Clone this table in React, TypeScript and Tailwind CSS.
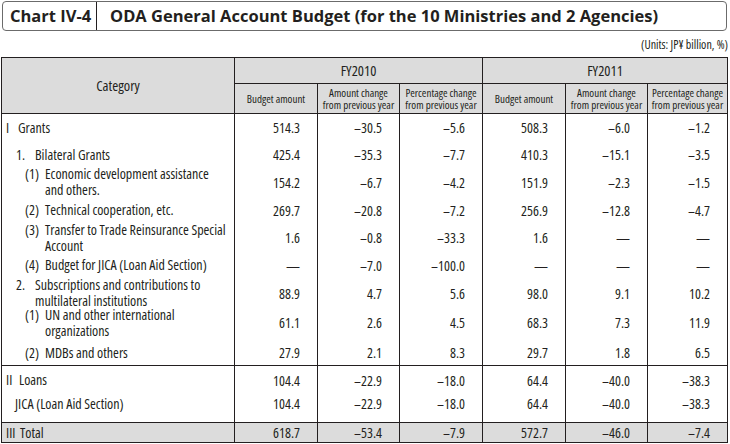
import React from "react";

type Row = {
  h: string;
  label: React.ReactNode;
  vals: string[];
  pad?: string;
};

function Label({ pl, mark, mw, children }: { pl: string; mark?: string; mw?: string; children: React.ReactNode }) {
  return (
    <div className={`flex ${pl}`}>
      {mark !== undefined && <span className={`shrink-0 ${mw}`}>{mark}</span>}
      <span>{children}</span>
    </div>
  );
}

const grants: Row[] = [
  { h: "h-[27px]", label: <Label pl="pl-[4px]" mark="I" mw="w-[12px]">Grants</Label>, vals: ["514.3", "–30.5", "–5.6", "508.3", "–6.0", "–1.2"] },
  { h: "h-[27px]", label: <Label pl="pl-[14px]" mark="1." mw="w-[19px]">Bilateral Grants</Label>, vals: ["425.4", "–35.3", "–7.7", "410.3", "–15.1", "–3.5"] },
  {
    h: "h-[28px]",
    label: <Label pl="pl-[23px]" mark="(1)" mw="w-[20px]">Economic development assistance<br />and others.</Label>,
    vals: ["154.2", "–6.7", "–4.2", "151.9", "–2.3", "–1.5"],
  },
  { h: "h-[28px]", label: <Label pl="pl-[23px]" mark="(2)" mw="w-[20px]">Technical cooperation, etc.</Label>, vals: ["269.7", "–20.8", "–7.2", "256.9", "–12.8", "–4.7"] },
  {
    h: "h-[27px]",
    label: <Label pl="pl-[23px]" mark="(3)" mw="w-[20px]">Transfer to Trade Reinsurance Special<br />Account</Label>,
    vals: ["1.6", "–0.8", "–33.3", "1.6", "—", "—"],
  },
  { h: "h-[28px]", label: <Label pl="pl-[23px]" mark="(4)" mw="w-[20px]">Budget for JICA (Loan Aid Section)</Label>, vals: ["—", "–7.0", "–100.0", "—", "—", "—"] },
  {
    h: "h-[28px]",
    label: <Label pl="pl-[14px]" mark="2." mw="w-[19px]">Subscriptions and contributions to<br />multilateral institutions</Label>,
    vals: ["88.9", "4.7", "5.6", "98.0", "9.1", "10.2"],
  },
  {
    h: "h-[31px]",
    label: <Label pl="pl-[23px]" mark="(1)" mw="w-[20px]">UN and other international<br />organizations</Label>,
    vals: ["61.1", "2.6", "4.5", "68.3", "7.3", "11.9"],
  },
  { h: "h-[27px]", label: <Label pl="pl-[23px]" mark="(2)" mw="w-[20px]">MDBs and others</Label>, vals: ["27.9", "2.1", "8.3", "29.7", "1.8", "6.5"], pad: "pt-[2px]" },
];

const loans: Row[] = [
  { h: "h-[28px]", label: <Label pl="pl-[4px]" mark="II" mw="w-[13px]">Loans</Label>, vals: ["104.4", "–22.9", "–18.0", "64.4", "–40.0", "–38.3"] },
  { h: "h-[28px]", label: <Label pl="pl-[13px]">JICA (Loan Aid Section)</Label>, vals: ["104.4", "–22.9", "–18.0", "64.4", "–40.0", "–38.3"], pad: "pb-[9px]" },
];

const widths = ["w-[83px]", "w-[82px]", "w-[83px]", "w-[83px]", "w-[82px]", "flex-1"];

function BodyRow({ r }: { r: Row }) {
  return (
    <div className={`flex ${r.h}`}>
      <div className={`w-[233px] shrink-0 border-r border-[#231f20] flex items-center leading-[16px] ${r.pad ?? ""}`}>{r.label}</div>
      {r.vals.map((v, i) => (
        <div
          key={i}
          className={`${widths[i]} shrink-0 flex items-center justify-end pr-[17px] ${i < 5 ? "border-r border-[#231f20]" : ""} ${r.pad ?? ""}`}
        >
          {v}
        </div>
      ))}
    </div>
  );
}

function SubHead({ w, last, children }: { w: string; last?: boolean; children: React.ReactNode }) {
  return (
    <div className={`${w} shrink-0 flex items-center justify-center text-center text-[11px] leading-[12px] ${last ? "" : "border-r border-[#231f20]"}`}>
      {children}
    </div>
  );
}

export default function App() {
  return (
    <div className="w-[730px] h-[444px] bg-white text-[#231f20] font-['Open_Sans',sans-serif] font-stretch-condensed">
      {/* title box */}
      <div className="pt-[1px] pl-[2px] pr-[3px]">
        <div className="flex h-[30px] rounded-[4px] border border-[#6b6b6b] font-stretch-normal font-bold text-[16.5px]">
          <div className="w-[94px] shrink-0 border-r border-[#231f20] flex items-center pl-[7px]">Chart IV-4</div>
          <div className="flex items-center pl-[13px]">ODA General Account Budget (for the 10 Ministries and 2 Agencies)</div>
        </div>
      </div>
      <div className="h-[26px] flex items-center justify-end pr-[2px] pt-[2px] text-[12px]">(Units: JP¥ billion, %)</div>

      {/* table */}
      <div className="ml-[1px] w-[727px] border border-[#231f20] text-[14px]">
        <div className="flex h-[56px] border-b border-[#231f20] bg-[#dcdcdc]">
          <div className="w-[233px] shrink-0 border-r border-[#231f20] flex items-center justify-center text-[14.5px]">Category</div>
          <div className="w-[248px] shrink-0 border-r border-[#231f20] flex flex-col">
            <div className="h-[26px] border-b border-[#231f20] flex items-center justify-center text-[14.5px]">FY2010</div>
            <div className="flex flex-1">
              <SubHead w="w-[83px]">Budget amount</SubHead>
              <SubHead w="w-[82px]">Amount change<br />from previous year</SubHead>
              <SubHead w="w-[82px]" last>Percentage change<br />from previous year</SubHead>
            </div>
          </div>
          <div className="flex-1 flex flex-col">
            <div className="h-[26px] border-b border-[#231f20] flex items-center justify-center text-[14.5px]">FY2011</div>
            <div className="flex flex-1">
              <SubHead w="w-[83px]">Budget amount</SubHead>
              <SubHead w="w-[82px]">Amount change<br />from previous year</SubHead>
              <SubHead w="flex-1" last>Percentage change<br />from previous year</SubHead>
            </div>
          </div>
        </div>

        <div className="border-b border-[#231f20]">
          {grants.map((r, i) => (
            <BodyRow key={i} r={r} />
          ))}
        </div>
        <div className="border-b border-[#231f20]">
          {loans.map((r, i) => (
            <BodyRow key={i} r={r} />
          ))}
        </div>
        <div className="bg-[#dcdcdc]">
          <BodyRow
            r={{ h: "h-[19px]", label: <Label pl="pl-[4px]" mark="III" mw="w-[14px]">Total</Label>, vals: ["618.7", "–53.4", "–7.9", "572.7", "–46.0", "–7.4"] }}
          />
        </div>
      </div>
    </div>
  );
}
